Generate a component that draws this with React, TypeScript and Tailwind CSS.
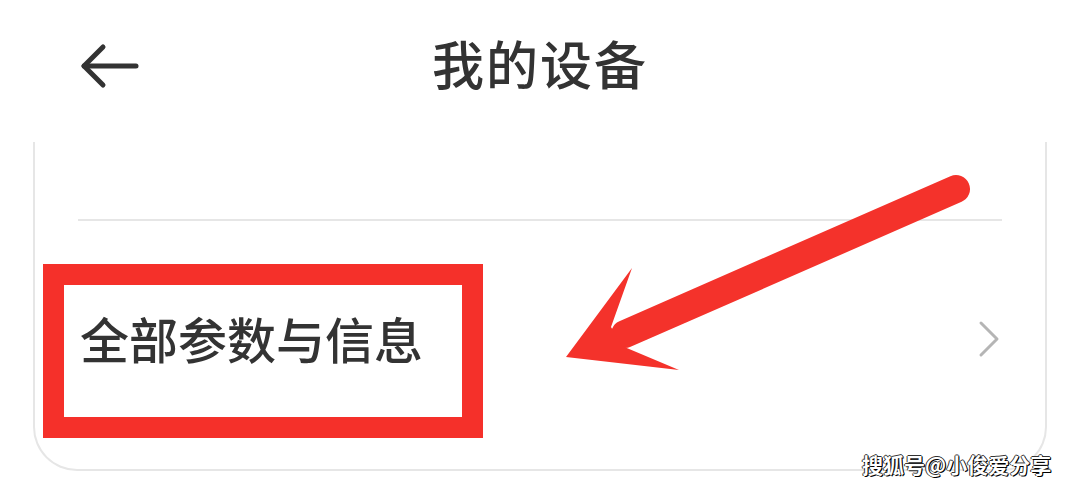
import React from "react";

export default function App() {
  return (
    <div
      className="relative w-[1080px] h-[495px] bg-white overflow-hidden"
      style={{ fontFamily: '"Noto Sans CJK SC", "Noto Sans", sans-serif' }}
    >
      {/* Header */}
      <div className="relative h-[142px] flex items-center justify-center">
        <svg
          className="absolute left-[78px] top-[42px]"
          width="64"
          height="48"
          viewBox="0 0 64 48"
          fill="none"
          stroke="#333333"
          strokeWidth="5"
          strokeLinecap="round"
          strokeLinejoin="round"
        >
          <path d="M25 5 L6 24 L25 43" />
          <path d="M6 24 L58 24" />
        </svg>
        <div className="text-[52px] leading-none font-medium text-[#333333] tracking-[2px] -mt-[16px]">
          我的设备
        </div>
      </div>

      {/* Card */}
      <div className="px-[33px]">
        <div className="h-[329px] border-x-2 border-b-2 border-[#e6e6e6] rounded-b-[44px] flex flex-col">
          <div className="h-[77px]" />
          <div className="mx-[43px] h-[2px] bg-[#e6e6e6]" />
          <div className="flex-1 flex items-center pl-[45px] pr-[44px] pb-[16px]">
            <div className="flex-1 text-[49px] leading-none font-medium text-[#333333]">
              全部参数与信息
            </div>
            <svg
              className="mt-[4px]"
              width="24"
              height="40"
              viewBox="0 0 24 40"
              fill="none"
              stroke="#b5b5b5"
              strokeWidth="3"
              strokeLinecap="round"
              strokeLinejoin="round"
            >
              <path d="M4 4 L20 20 L4 36" />
            </svg>
          </div>
        </div>
      </div>

      {/* Red annotation rectangle */}
      <div className="absolute left-[43px] top-[264px] w-[440px] h-[174px] border-[21px] border-[#f5302a]" />

      {/* Red annotation arrow */}
      <svg
        className="absolute left-0 top-0 pointer-events-none"
        width="1080"
        height="495"
        viewBox="0 0 1080 495"
      >
        <line
          x1="956"
          y1="189"
          x2="625"
          y2="334"
          stroke="#f4322b"
          strokeWidth="28"
          strokeLinecap="round"
        />
        <path
          d="M566 357 L632 268 L611 327 L622 346 L679 370 Z"
          fill="#f4322b"
        />
      </svg>

      {/* Watermark */}
      <div
        className="absolute left-[862px] top-[454px] text-[21px] leading-none font-bold text-white"
        style={{ textShadow: "1px 1px 0 #000, -1px 0 0 #333, 0 -1px 0 #333, 1px 0 0 #222" }}
      >
        搜狐号@小俊爱分享
      </div>
    </div>
  );
}
